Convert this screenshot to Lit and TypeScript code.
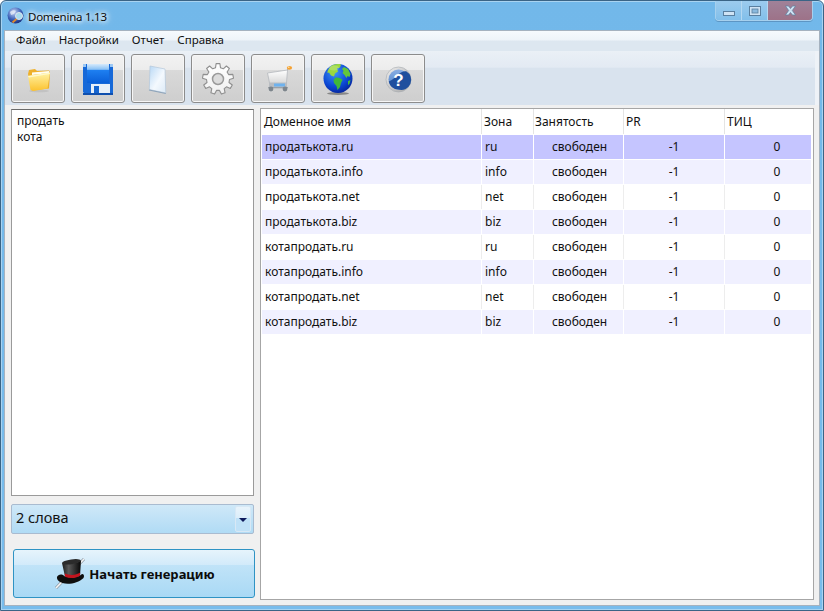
import { LitElement, html, css, svg } from "lit";
import { customElement } from "lit/decorators.js";

const folder = svg`<svg class="ic" width="52" height="47" viewBox="0 0 52 47">
<defs><linearGradient id="fa" x1="0" y1="0" x2="0" y2="1"><stop offset="0" stop-color="#fff3a6"/><stop offset="1" stop-color="#fcc22e"/></linearGradient></defs>
<ellipse cx="27" cy="36" rx="10" ry="1.300" fill="#b8b8b8" opacity=".6"/>
<path d="M16 19l1-4 6-1 2 2 12-.5 1 2-1 16-17 2z" fill="#eeb02a"/>
<path d="M20 17.500l17-1.500 0 2-17 2z" fill="#fffdf0"/>
<path d="M16 21l22-3.500-2.500 16-14 2.500-3-1z" fill="url(#fa)"/>
<path d="M16 21l22-3.500-.3 1.600-21 3.400z" fill="#fff8c8"/>
</svg>`;

const floppy = svg`<svg class="ic" width="52" height="47" viewBox="1 0 52 47">
<defs><linearGradient id="fb" x1="0" y1="0" x2="0" y2="1"><stop offset="0" stop-color="#d6eafc"/><stop offset=".28" stop-color="#8cc2f5"/><stop offset=".34" stop-color="#1e7ff0"/><stop offset="1" stop-color="#0a5fd8"/></linearGradient></defs>
<path d="M12 9h30v30h-28l-2-2z" fill="#1769d8"/>
<rect x="16" y="9" width="22" height="19" fill="url(#fb)"/>
<rect x="12" y="9" width="3" height="3" fill="#9cc8f5"/>
<rect x="39" y="9" width="3" height="3" fill="#9cc8f5"/>
<rect x="20" y="29" width="19" height="11" fill="#e8f0f9"/>
<rect x="23" y="31" width="5" height="8" fill="#1565d0"/>
<rect x="12" y="38" width="30" height="2" fill="#0f4fae"/>
</svg>`;

const page = svg`<svg class="ic" width="52" height="47" viewBox="3 0 52 47">
<defs><linearGradient id="pa" x1="0" y1="0" x2="1" y2="1"><stop offset="0" stop-color="#b8d8f5"/><stop offset=".55" stop-color="#f4f9fe"/><stop offset="1" stop-color="#dbe9f6"/></linearGradient></defs>
<path d="M21 11l15 3 .8 24-16.500-3.500z" fill="url(#pa)" stroke="#b4c7da" stroke-width=".7"/>
<path d="M20.300 34.500l16.500 3.500v1l-17-3.500z" fill="#8ea4ba"/>
</svg>`;

function gearPath() {
  const cx = 26, cy = 24, n = 9, ro = 15.5, ri = 11.5;
  let d = "";
  for (let i = 0; i < n; i++) {
    const a = (i / n) * Math.PI * 2 - Math.PI / 2;
    const s = Math.PI / n;
    const p = [
      [ri, a - s * 0.62],
      [ro, a - s * 0.36],
      [ro, a + s * 0.36],
      [ri, a + s * 0.62],
    ];
    for (const [r, t] of p) {
      d += (d ? "L" : "M") + (cx + r * Math.cos(t)).toFixed(1) + " " + (cy + r * Math.sin(t)).toFixed(1);
    }
  }
  return d + "Z";
}
const gear = svg`<svg class="ic" width="52" height="47" viewBox="0 0 52 47">
<defs><linearGradient id="ga" x1="0" y1="0" x2="0" y2="1"><stop offset="0" stop-color="#ffffff"/><stop offset="1" stop-color="#f0f0f0"/></linearGradient></defs>
<path d=${gearPath()} fill="url(#ga)" stroke="#8f8f8f" stroke-width="1.100" stroke-linejoin="round"/>
<circle cx="26" cy="24" r="5.500" fill="#dcdcdc" stroke="#9a9a9a" stroke-width="1.500"/>
</svg>`;

const cart = svg`<svg class="ic" width="52" height="47" viewBox="0 0 52 47">
<defs><linearGradient id="ca" x1="0" y1="0" x2="0" y2="1"><stop offset="0" stop-color="#ffffff"/><stop offset="1" stop-color="#d9d9d9"/></linearGradient></defs>
<path d="M15.500 18l20-3-1 13h-17z" fill="url(#ca)" stroke="#b4b8bc" stroke-width=".8"/>
<path d="M35.500 15l1-2" stroke="#a8a8a8" stroke-width="1.100"/>
<ellipse cx="37.500" cy="12.800" rx="2.600" ry="1.900" fill="#f5a030"/>
<circle cx="36.800" cy="12.300" r=".8" fill="#ffe7b0"/>
<path d="M17 28h18v4h-18z" fill="#b9bdc2"/>
<path d="M22 28.500h11v3h-11z" fill="#6eb2ee"/>
<path d="M16 32h20v1.300h-20z" fill="#9aa0a6"/>
<circle cx="19" cy="34" r="2.400" fill="#7d858c"/>
<circle cx="33" cy="34" r="2.400" fill="#7d858c"/>
</svg>`;

const globe = svg`<svg class="ic" width="52" height="47" viewBox="1 1 52 47">
<defs><radialGradient id="gb" cx=".4" cy=".3" r=".8"><stop offset="0" stop-color="#3f92f5"/><stop offset=".6" stop-color="#0b47d4"/><stop offset="1" stop-color="#051c8c"/></radialGradient></defs>
<ellipse cx="27" cy="39.500" rx="11" ry="1.500" fill="#555" opacity=".6"/>
<circle cx="27" cy="24.500" r="14.500" fill="url(#gb)"/>
<path d="M19 13c3-3 8-3.500 11-2.500l-1 3-3 1 1 3-3 2-1 3-3-1-2-3-1.500 .5c-.2-2 1-4 2.500-6z" fill="#9ad83f"/>
<path d="M24 24c2-1 6 0 7.500 2l-1.500 3-1 4-2.500 3-1-4-2.500-3-.5-3z" fill="#3fb83a"/>
<path d="M33 13l4 2 2.500 5-1 3-2-1-1 2-2-3-2-2 1-2-1.500-2z" fill="#63c63a"/>
<path d="M37 27l2.500-1-1 4-1.500 1z" fill="#47b83a"/>
<ellipse cx="23" cy="14" rx="5" ry="2.500" fill="#fff" opacity=".18"/>
</svg>`;

const help = svg`<svg class="ic" width="52" height="47" viewBox="0.5 1 52 47">
<defs><linearGradient id="ha" x1="0" y1="0" x2="1" y2="1"><stop offset="0" stop-color="#f0f0f0"/><stop offset="1" stop-color="#a4a4a4"/></linearGradient>
<linearGradient id="hb" x1="0" y1="0" x2="0" y2="1"><stop offset="0" stop-color="#8aaee2"/><stop offset="1" stop-color="#4a80cc"/></linearGradient></defs>
<circle cx="27" cy="25.500" r="12.500" fill="url(#ha)" stroke="#a4a9af" stroke-width=".6"/>
<circle cx="27" cy="25.500" r="10" fill="url(#hb)"/>
<path d="M17.200 27.500c3-1 6-3.500 8.500-6 3-3 5.500-4.700 9-4.300a10 10 0 0 1-7.700 18.300 10 10 0 0 1-9.800-8z" fill="#1f4f9e"/>
<text x="27" y="32" text-anchor="middle" font-family="Liberation Sans, sans-serif" font-weight="700" font-size="17" fill="#fff">?</text>
</svg>`;

const hat = svg`<svg class="hat" width="34" height="34" viewBox="0 0 34 34">
<defs><linearGradient id="ta" x1="0" y1="0" x2="1" y2="0"><stop offset="0" stop-color="#1a1a1a"/><stop offset=".35" stop-color="#5a5a5a"/><stop offset="1" stop-color="#050505"/></linearGradient></defs>
<path d="M3 31L31 2" stroke="#8c9aa6" stroke-width="3"/>
<path d="M3 31L31 2" stroke="#f6f6f6" stroke-width="1.600"/>
<path d="M9 6c5 1.500 13 1 19-2.500l-1 15c-5 3-10 3-15 1z" fill="url(#ta)"/>
<ellipse cx="18.500" cy="4.800" rx="9.500" ry="2.400" transform="rotate(-8 18.500 4.800)" fill="#2b2b2b"/>
<path d="M4 20c1-2 3-3 6-2l2 1.500c5 1.500 10 1.500 15-1l2-1.500c2 0 2.500 2 1.500 4-5 5-15 7-21 5-3-1-6-3-5.500-6z" fill="#0e0e0e"/>
<path d="M11.700 16.500c5 2 11 2 15.500-1l-.2 3.200c-5 3-10 3-15 1z" fill="#c2141e"/>
</svg>`;

const appIcon = svg`<svg width="18" height="18" viewBox="0 0 18 18">
<defs><radialGradient id="ai" cx=".4" cy=".3" r=".8"><stop offset="0" stop-color="#c6d5f5"/><stop offset=".55" stop-color="#3d62b8"/><stop offset="1" stop-color="#14246e"/></radialGradient></defs>
<circle cx="8.500" cy="8.500" r="8" fill="url(#ai)"/>
<path d="M3 5c2-2 5-2 6-1l-2 3-3 1z" fill="#e6ecf8" opacity=".8"/>
<circle cx="12" cy="9" r="3.500" fill="#a9dcef" stroke="#dfe6ee" stroke-width="1"/>
<path d="M9.500 12l-4 3.500" stroke="#e08a2a" stroke-width="1.800"/>
</svg>`;

const rows = [
  ["продатькота.ru", "ru"],
  ["продатькота.info", "info"],
  ["продатькота.net", "net"],
  ["продатькота.biz", "biz"],
  ["котапродать.ru", "ru"],
  ["котапродать.info", "info"],
  ["котапродать.net", "net"],
  ["котапродать.biz", "biz"],
];

@customElement("app-root")
export class AppRoot extends LitElement {
  static styles = css`
    :host { display: block; width: 824px; height: 611px; font-family: "Noto Sans", "Open Sans", sans-serif; font-size: 12px; color: #111; }
    * { box-sizing: border-box; }
    .win { width: 824px; height: 611px; display: flex; flex-direction: column; background: linear-gradient(#72b8ea, #78bcec); border: 1px solid #3a6486; border-radius: 6px 6px 0 0; box-shadow: inset 0 0 0 1px #a8d3f1; padding: 0 3px 4px 3px; }
    .title { height: 29px; flex: none; display: flex; align-items: flex-start; justify-content: space-between; padding-left: 3px; padding-right: 7px; }
    .brand { display: flex; align-items: center; gap: 3px; height: 26px; padding-top: 4px; }
    .brand span { font-size: 11.5px; letter-spacing: -0.25px; color: #0c0c0c; text-shadow: 0 0 5px #fff, 0 0 5px #fff, 0 0 8px #fff; }
    .ctl { display: flex; height: 20px; border: 1px solid #a6d0ee; border-top: 0; border-radius: 0 0 4px 4px; overflow: hidden; box-shadow: 0 1px 0 #5c95c4; }
    .ctl div { display: flex; align-items: center; justify-content: center; background: linear-gradient(#9ccbee, #82bfea); border-right: 1px solid #b4d8f2; }
    .b1, .b2 { width: 26px; }
    .b1 svg { margin-top: 7px; }
    .b3 { width: 44px; border-right: 0 !important; background: linear-gradient(#a08299, #9d7288) !important; }
    .client { flex: 1; min-height: 0; display: flex; flex-direction: column; border: 1px solid #a5b2bf; background: #f0f0f0; }
    .menu { flex: none; height: 20px; display: flex; gap: 13px; padding: 1px 0 0 11px; background: linear-gradient(#f6fafd 0, #eef4f9 45%, #dde7f0 50%, #dde7f0 100%); font-size: 11.5px; }
    .tools { flex: none; height: 54px; display: flex; gap: 6px; padding: 3px 0 0 6px; border-right: 4px solid #eef2f7; background: linear-gradient(#eaf0f6 0, #e3eaf3 30%, #d9e3ee 32%, #d9e3ee 100%); }
    .tb { width: 54px; height: 49px; flex: none; border: 1px solid #8c8c8c; border-radius: 3px; box-shadow: inset 0 0 0 1px #f6f6f6; background: linear-gradient(#f2f2f2 0, #ececec 32%, #d9d9d9 33%, #cecece 100%); }
    .ic { display: block; }
    .body { flex: 1; min-height: 0; display: flex; gap: 6px; padding: 3px 5px 6px 6px; }
    .left { width: 243px; flex: none; display: flex; flex-direction: column; padding-top: 1px; }
    .words { height: 387px; flex: none; background: #fff; border: 1px solid #9a9a9a; border-top-color: #6b6b6b; padding: 3px 5px; line-height: 16px; }
    .words div { height: 16px; }
    .combo { flex: none; height: 30px; margin-top: 8px; display: flex; align-items: center; justify-content: space-between; padding: 0 2px 0 4px; border: 1px solid #a9bbd0; border-radius: 2px; background: linear-gradient(#cfe8f8, #b0dbf5); font-size: 14.5px; color: #111; }
    .combo span { padding-bottom: 5px; }
    .arrow { width: 16px; height: 26px; display: flex; align-items: center; justify-content: center; border: 1px solid #d8e8f5; border-radius: 2px; background: linear-gradient(#e8f3fb 0, #dceefa 45%, #bfe1f7 46%, #bfe1f7 100%); }
    .arrow i { display: block; width: 0; height: 0; border-left: 4px solid transparent; border-right: 4px solid transparent; border-top: 4px solid #0e1a5c; margin-top: 1px; }
    .go { flex: none; width: 242px; height: 49px; margin: 15px 0 0 2px; display: flex; align-items: center; justify-content: center; gap: 2px; border: 1px solid #2f93c4; border-radius: 3px; background: linear-gradient(#e6f4fc 0, #d2eafa 32%, #c0e3f8 33%, #a9d9f5 100%); font-weight: 700; font-size: 13px; color: #0b0b0b; }
    .hat { display: block; }
    .tbl { flex: none; width: 554px; height: 492px; background: #fff; border: 1px solid #a6a6a6; padding: 0 2px 0 1px; }
    .row { display: grid; grid-template-columns: 220px 52px 90px 101px 86px; height: 25px; align-items: stretch; border-bottom: 1px solid #fff; }
    .row > div { display: flex; align-items: center; border-right: 1px solid #ededed; padding: 0 0 1px 3px; white-space: nowrap; }
    .row > div:last-child { border-right: 0; }
    .head { height: 26px; background: #fff; }
    .head > div { padding-left: 2px; border-right-color: #e4e4e4; }
    .head > div:nth-child(3) { padding-left: 1px; }
    .row.sel { background: #c5c5ff; }
    .row.alt { background: #f0f0ff; }
    .row.sel > div, .row.alt > div { border-right-color: #fff; }
    .c { justify-content: center; padding-left: 0 !important; }
    .c1 { justify-content: center; padding-left: 2px !important; }
    .c0 { justify-content: center; padding-left: 18px !important; }
  `;

  render() {
    const tools = [folder, floppy, page, gear, cart, globe, help];
    return html`<div class="win">
      <div class="title">
        <div class="brand">${appIcon}<span>Domenina 1.13</span></div>
        <div class="ctl">
          <div class="b1"><svg width="12" height="6" viewBox="0 0 12 6"><rect x=".5" y=".5" width="11" height="4" fill="#cfe3f4" stroke="#5a7f9f"/></svg></div>
          <div class="b2"><svg width="12" height="10" viewBox="0 0 12 10"><rect x=".5" y=".5" width="11" height="9" fill="#cfe3f4" stroke="#5a7f9f"/><rect x="3" y="3" width="6" height="4" fill="#8ab9de" stroke="#5a7f9f" stroke-width=".8"/></svg></div>
          <div class="b3"><svg width="13" height="11" viewBox="0 0 13 11"><path d="M1.500 1h3l2 2.500 2-2.500h3l-3.200 4.500 3.200 4.500h-3l-2-2.500-2 2.500h-3l3.200-4.500z" fill="#cfe3f4" stroke="#5a7f9f" stroke-width=".7"/></svg></div>
        </div>
      </div>
      <div class="client">
        <div class="menu"><span>Файл</span><span>Настройки</span><span>Отчет</span><span>Справка</span></div>
        <div class="tools">${tools.map((t) => html`<div class="tb">${t}</div>`)}</div>
        <div class="body">
          <div class="left">
            <div class="words"><div>продать</div><div>кота</div></div>
            <div class="combo"><span>2 слова</span><div class="arrow"><i></i></div></div>
            <div class="go">${hat}<span>Начать генерацию</span></div>
          </div>
          <div class="tbl">
            <div class="row head"><div>Доменное имя</div><div>Зона</div><div>Занятость</div><div>PR</div><div>ТИЦ</div></div>
            ${rows.map((r, i) => html`<div class="row ${i === 0 ? "sel" : i % 2 ? "alt" : ""}">
              <div>${r[0]}</div><div>${r[1]}</div><div class="c1">свободен</div><div class="c">-1</div><div class="c0">0</div>
            </div>`)}
          </div>
        </div>
      </div>
    </div>`;
  }
}
